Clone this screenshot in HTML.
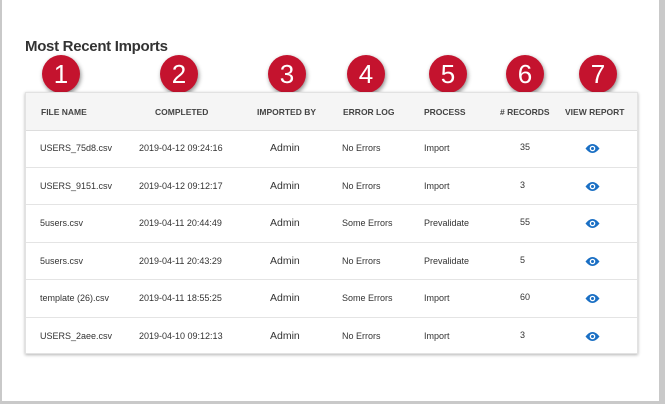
<!DOCTYPE html><html><head><style>
body{margin:0;width:665px;height:404px;background:#c9c9c9;font-family:"Liberation Sans",sans-serif;position:relative;overflow:hidden}
.frame{position:absolute;left:2px;top:0;width:657px;height:401px;background:#fff}
h1{position:absolute;left:25px;top:38px;margin:0;font-size:15px;font-weight:bold;color:#333;letter-spacing:-0.3px}
.card{position:absolute;left:25px;top:92px;width:613px;height:262px;background:#fff;box-shadow:0 1px 3px rgba(0,0,0,.3);border:1px solid #e2e2e2;box-sizing:border-box}
.hdr{position:absolute;left:0;top:0;width:100%;height:37px;background:#f5f5f5;border-bottom:1px solid #ddd}
.t{position:absolute;font-size:9px;color:#333;white-space:nowrap}
.h{font-weight:bold;font-size:8.5px;color:#444;top:14px}
.c{position:absolute;width:38px;height:38px;border-radius:50%;background:#c4132e;color:#fff;font-size:26px;text-align:center;line-height:38px;box-shadow:1px 2px 4px rgba(0,0,0,.45)}
.eye{position:absolute;width:15px;height:11px}
</style></head><body><div class="frame"></div>
<h1>Most Recent Imports</h1>
<div class="c" style="left:42px;top:55px">1</div>
<div class="c" style="left:160px;top:55px">2</div>
<div class="c" style="left:268px;top:55px">3</div>
<div class="c" style="left:347px;top:55px">4</div>
<div class="c" style="left:429px;top:55px">5</div>
<div class="c" style="left:506px;top:55px">6</div>
<div class="c" style="left:579px;top:55px">7</div>
<div class="card">
<div class="hdr"></div>
<div class="t h" style="left:15px">FILE NAME</div>
<div class="t h" style="left:129px">COMPLETED</div>
<div class="t h" style="left:231px">IMPORTED BY</div>
<div class="t h" style="left:317px">ERROR LOG</div>
<div class="t h" style="left:398px">PROCESS</div>
<div class="t h" style="left:474px">#&nbsp;RECORDS</div>
<div class="t h" style="left:539px">VIEW REPORT</div>
</div>
<div id="rows"></div>
<script>
var d=[["USERS_75d8.csv","2019-04-12 09:24:16","No Errors","Import","35"],["USERS_9151.csv","2019-04-12 09:12:17","No Errors","Import","3"],["5users.csv","2019-04-11 20:44:49","Some Errors","Prevalidate","55"],["5users.csv","2019-04-11 20:43:29","No Errors","Prevalidate","5"],["template (26).csv","2019-04-11 18:55:25","Some Errors","Import","60"],["USERS_2aee.csv","2019-04-10 09:12:13","No Errors","Import","3"]];
var h="";d.forEach(function(r,i){var y=92+37+i*37.5;var ty=y+14;
if(i>0)h+='<div style="position:absolute;left:26px;width:611px;height:1px;background:#e4e4e4;top:'+Math.round(y)+'px"></div>';
h+='<div class="t" style="left:40px;top:'+ty+'px">'+r[0]+'</div>';
h+='<div class="t" style="left:139px;top:'+ty+'px">'+r[1]+'</div>';
h+='<div class="t" style="left:270px;top:'+(ty-1)+'px;font-size:10.5px">Admin</div>';
h+='<div class="t" style="left:342px;top:'+ty+'px">'+r[2]+'</div>';
h+='<div class="t" style="left:424px;top:'+ty+'px">'+r[3]+'</div>';
h+='<div class="t" style="left:520px;top:'+(ty-1)+'px">'+r[4]+'</div>';
h+='<svg class="eye" style="left:585px;top:'+ty+'px" viewBox="0 0 15 11"><path d="M0.5 5.5Q7.5 -3.5 14.5 5.5Q7.5 14.5 0.5 5.5Z" fill="#1a6fc4"/><circle cx="7.5" cy="5.5" r="2.8" fill="#fff"/><circle cx="7.5" cy="5.5" r="1.5" fill="#1a6fc4"/></svg>';});
document.getElementById("rows").innerHTML=h;
</script>
</body></html>
